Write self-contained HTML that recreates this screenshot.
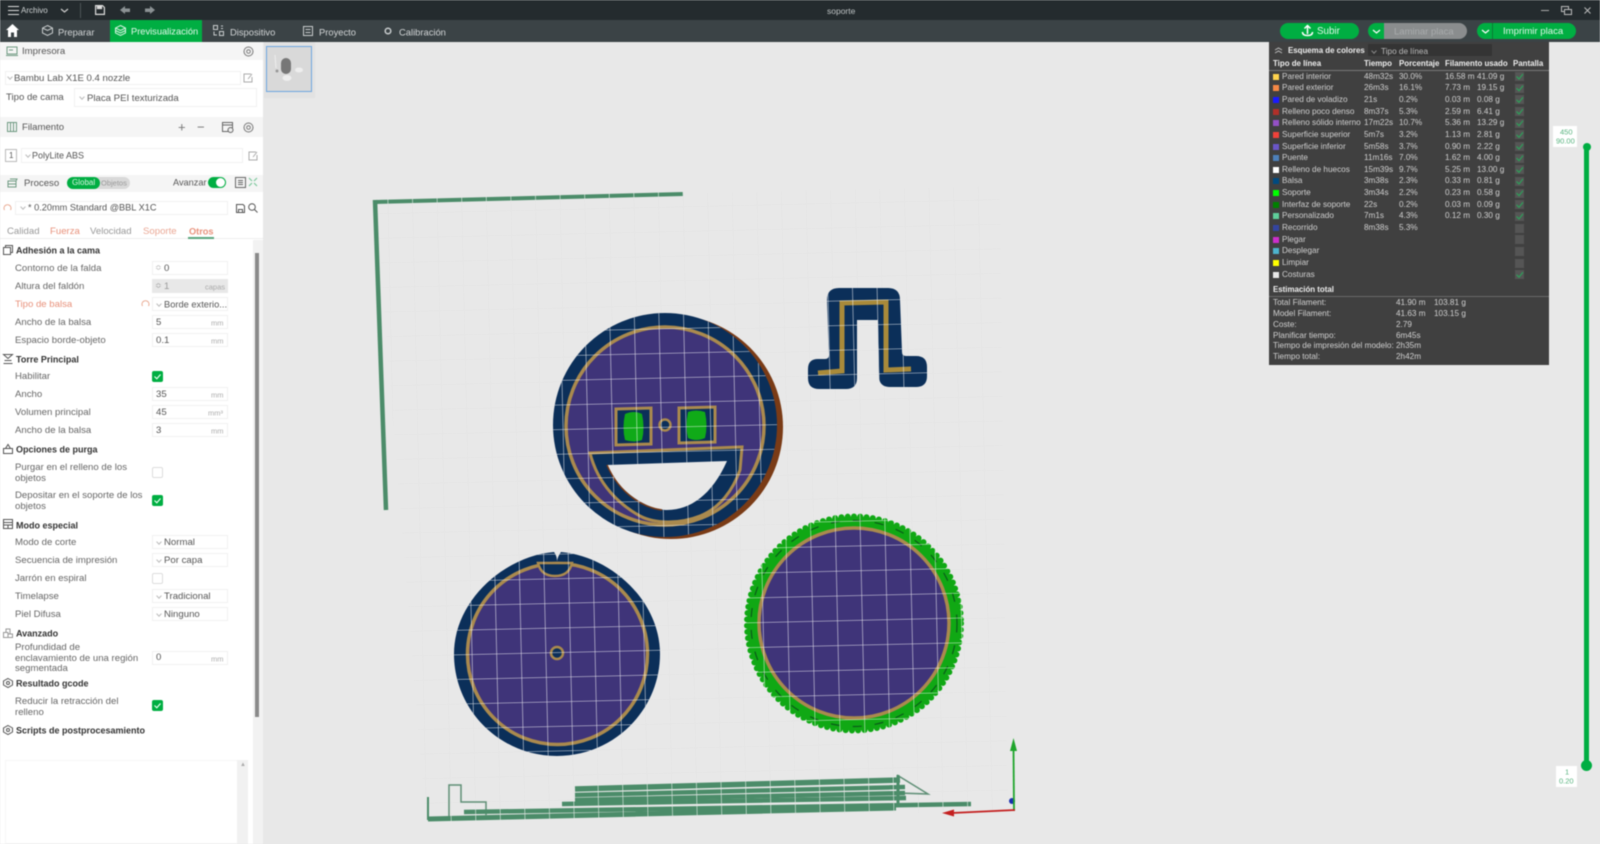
<!DOCTYPE html>
<html lang="es"><head><meta charset="utf-8"><title>soporte</title>
<style>
html,body{margin:0;padding:0;width:1600px;height:844px;overflow:hidden;background:#e8e8e8}
#app{position:absolute;left:0;top:0;width:1600px;height:844px;overflow:hidden;font-family:"Liberation Sans",sans-serif;filter:blur(.45px)}
.a{position:absolute}
.t{position:absolute;white-space:nowrap;line-height:1;transform:translateY(calc(-50% + 1px));font-size:9.6px;color:#666}
.b{font-weight:bold;color:#333;font-size:9px}
.box{position:absolute;background:#fff;border:1px solid #f1f1f1;box-sizing:border-box}
.hd{position:absolute;left:0;width:263px;background:#f5f5f5}
.u{color:#aaa;font-size:7.5px}
.cv{position:absolute;width:3px;height:3px;border-right:1px solid #bbb;border-bottom:1px solid #bbb;transform:rotate(45deg)}
.chk{position:absolute;left:152px;width:11px;height:11px;background:#00ae42;border-radius:2px}
.chk svg{position:absolute;left:0;top:0}
.unc{position:absolute;left:152px;width:11px;height:11px;background:#fff;border:1px solid #ddd;box-sizing:border-box;border-radius:2px}
.w{color:#d0d0d0;font-size:8.2px}
.h{color:#eee;font-size:7.9px;font-weight:bold}
.sw{position:absolute;left:1273px;width:6px;height:6px}
.ck{position:absolute;left:1515px;width:9px;height:9px;background:#555}
svg.i{position:absolute;overflow:visible}
</style></head><body><div id="app">

<!-- viewport -->
<svg class="a" style="left:0;top:0" width="1600" height="844" viewBox="0 0 1600 844">
<defs>
<pattern id="pf" width="24.6" height="24.6" patternUnits="userSpaceOnUse" patternTransform="translate(545,628) rotate(-1.3)"><path d="M0 0H24.6M0 0V24.6" stroke="#dedede" stroke-width="1" fill="none"/></pattern>
<pattern id="p1" width="24.6" height="24.6" patternUnits="userSpaceOnUse" patternTransform="translate(636,403) rotate(-1.3)"><path d="M0 0H24.6M0 0V24.6" stroke="#fff" stroke-width="1.1" opacity=".85" fill="none"/></pattern>
<pattern id="p2" width="24.6" height="24.6" patternUnits="userSpaceOnUse" patternTransform="translate(545,628) rotate(-1.3)"><path d="M0 0H24.6M0 0V24.6" stroke="#fff" stroke-width="1.1" opacity=".85" fill="none"/></pattern>
<pattern id="p3" width="24.8" height="24.8" patternUnits="userSpaceOnUse" patternTransform="translate(862,620) rotate(-1.3)"><path d="M0 0H24.8M0 0V24.8" stroke="#fff" stroke-width="1.1" opacity=".85" fill="none"/></pattern>
<pattern id="p4" width="24.6" height="24.6" patternUnits="userSpaceOnUse" patternTransform="translate(853,325) rotate(-1.3)"><path d="M0 0H24.6M0 0V24.6" stroke="#fff" stroke-width="1.1" opacity=".85" fill="none"/></pattern>
<pattern id="pr" width="24.6" height="50" patternUnits="userSpaceOnUse" patternTransform="translate(545,628) rotate(-1.3)"><rect width="24.6" height="50" fill="#4b8c69"/><path d="M0 0V50" stroke="#fff" stroke-width="1"/></pattern>
<path id="pi" d="M839 288H888Q900 288 900 300L902 352Q902 356 906 356H916Q927 356 927 367V376Q927 387 916 387H890Q879 387 879 376L878 320H857L857 378Q857 389 846 389H819Q808 389 808 378V369Q808 359 818 359H825Q829 359 829 355L827 300Q827 288 839 288Z"/>
</defs>
<rect x="0" y="0" width="1600" height="844" fill="#e8e8e8"/>
<path d="M375 200L1000 186L1008 812L425 820Z" fill="url(#pf)" opacity=".5"/>

<!-- L rail -->
<path d="M376 202L683 194" stroke="url(#pr)" stroke-width="4" fill="none"/>
<path d="M375 200L386 510" stroke="url(#pr)" stroke-width="4.5" fill="none"/>
<path d="M373 202H378" stroke="#4b8c69" stroke-width="4"/>

<!-- smiley -->
<circle cx="671" cy="427" r="112" fill="#7a3b16"/>
<circle cx="665" cy="425" r="112" fill="#0b2f59"/>
<circle cx="665" cy="426" r="99" fill="#3f3479" stroke="#aa8a4e" stroke-width="3.500"/>
<path d="M590 453L742 447L740 470C733 490 720 508 700 516C680 524 655 524 640 516C620 505 598 485 590 453Z" fill="#0b2f59" stroke="#aa8a4e" stroke-width="3"/>
<path d="M607 465L727 461C712 495 690 510 667 510C650 510 620 495 607 465Z" fill="#e8e8e8"/>
<path d="M607 465C620 495 645 508 662 510" fill="none" stroke="#7a3b16" stroke-width="1.500"/>
<path d="M616 409L651 408L651 444L616 445Z" fill="#0b2f59" stroke="#aa8a4e" stroke-width="3"/>
<path d="M679 408L715 407L715 442L679 443Z" fill="#0b2f59" stroke="#aa8a4e" stroke-width="3"/>
<path d="M625 414Q634 410 642 414Q645 428 642 440Q634 443 625 440Q622 428 625 414Z" fill="#10aa18"/>
<path d="M688 412Q696 409 705 412Q708 426 705 438Q696 442 688 438Q685 426 688 412Z" fill="#10aa18"/>
<circle cx="665" cy="425" r="5.500" fill="#0b2f59" stroke="#aa8a4e" stroke-width="2.500"/>
<path fill-rule="evenodd" d="M553 425a112 112 0 1 0 224 0a112 112 0 1 0 -224 0ZM607 465L727 461C712 495 690 510 667 510C650 510 620 495 607 465Z" fill="url(#p1)"/>

<!-- pi shape -->
<use href="#pi" fill="#0b2f59"/>
<path d="M818 373L842 371L842 303L886 302L886 370L911 369" fill="none" stroke="#a98a3a" stroke-width="5"/>
<use href="#pi" fill="url(#p4)"/>

<!-- circle 2 -->
<path d="M554 552Q557 556 557 561Q558 556 561 552C610 556 660 600 660 654C660 710 614 756 557 756C500 756 454 710 454 654C454 600 505 556 554 552Z" fill="#0b2f59"/>
<ellipse cx="557.500" cy="654" rx="90" ry="90.500" fill="#3f3479" stroke="#aa8a4e" stroke-width="3.500"/>
<path d="M538 563Q541 576 555 576Q569 576 572 563Z" fill="#0b2f59" stroke="#aa8a4e" stroke-width="2.500"/>
<circle cx="557" cy="653" r="6" fill="#0b2f59" stroke="#aa8a4e" stroke-width="2.500"/>
<path d="M554 552Q557 556 557 561Q558 556 561 552C610 556 660 600 660 654C660 710 614 756 557 756C500 756 454 710 454 654C454 600 505 556 554 552Z" fill="url(#p2)"/>

<!-- circle 3 -->
<circle cx="854" cy="623.500" r="107" fill="#10a814"/>
<circle cx="854" cy="623.500" r="107" fill="none" stroke="#10a814" stroke-width="6" stroke-linecap="round" stroke-dasharray="0 6.300"/>
<circle cx="854" cy="623.500" r="103" fill="none" stroke="#0b5a1a" stroke-width="1.200" stroke-dasharray="9 13"/>
<circle cx="854" cy="623" r="95" fill="#3f3479" stroke="#aa8a4e" stroke-width="3.500"/>
<circle cx="854" cy="623.500" r="110" fill="url(#p3)"/>

<!-- bottom rails -->
<path d="M428 797V820" stroke="#4b8c69" stroke-width="2" fill="none"/>
<path d="M449 818V785H461V802H486V815" fill="none" stroke="#5f8f76" stroke-width="1.500"/>
<path d="M897 775L928 794L898 793" fill="none" stroke="#5f8f76" stroke-width="1.500"/>
<path d="M898 775V807" stroke="#4b8c69" stroke-width="3" fill="none"/>
<g fill="none" stroke="url(#pr)">
<path d="M428 819L896 808" stroke-width="5"/>
<path d="M464 812L971 804" stroke-width="4.500"/>
<path d="M562 804L906 798" stroke-width="4.500"/>
<path d="M575 800L905 793" stroke-width="4.500"/>
<path d="M575 795L905 787" stroke-width="4.500"/>
<path d="M575 789L900 780" stroke-width="5.500"/>
</g>

<!-- axes -->
<circle cx="1012" cy="801" r="3" fill="#1a2fb0"/>
<path d="M1014 811L1013.500 748" stroke="#1fa52c" stroke-width="1.800"/>
<path d="M1013.500 738L1017 751H1010Z" fill="#1fa52c"/>
<path d="M1015 810L952 813" stroke="#c41f1f" stroke-width="1.800"/>
<path d="M942 813L954 809.500V816.500Z" fill="#c41f1f"/>
</svg>

<!-- thumbnail -->
<div class="a" style="left:264px;top:42px;width:51px;height:56px;background:#e2e2e2"></div>
<div class="a" style="left:266px;top:46px;width:46px;height:46px;background:#d9d9d9;border:1px solid #6ea6e0;box-sizing:border-box"></div>
<svg class="i" style="left:266px;top:46px" width="46" height="46"><path d="M9 9L10 22" stroke="#eee" stroke-width="1"/><rect x="15" y="12" width="10" height="16" rx="5" fill="#777"/><ellipse cx="33" cy="24" rx="4" ry="2.500" fill="#eee"/><ellipse cx="21" cy="32" rx="4.500" ry="3" fill="#eee"/><circle cx="11" cy="25" r="1.500" fill="#999"/></svg>

<!-- left panel -->
<div class="a" style="left:0;top:42px;width:263px;height:802px;background:#fff"></div>
<div class="a" style="left:253px;top:240px;width:10px;height:604px;background:#f2f2f2"></div>
<div class="a" style="left:255px;top:253px;width:4px;height:464px;background:#8a8a8a"></div>
<div class="hd" style="top:42px;height:18px"></div>
<div class="hd" style="top:117px;height:20px"></div>
<div class="hd" style="top:175px;height:17px"></div>

<svg class="i" style="left:6px;top:46px" width="12" height="10" fill="none" stroke="#6f9a82" stroke-width="1"><rect x="1" y="1" width="10" height="7"/><path d="M3 4H7M0 9.500H12"/></svg>
<span class="t" style="left:22px;top:51px;color:#555">Impresora</span>
<svg class="i" style="left:243px;top:46px" width="11" height="11" fill="none" stroke="#777" stroke-width="1"><circle cx="5.500" cy="5.500" r="4.500"/><circle cx="5.500" cy="5.500" r="1.800"/></svg>

<div class="box" style="left:5px;top:71px;width:236px;height:14px"></div>
<i class="cv" style="left:8px;top:75px"></i>
<span class="t" style="left:14px;top:78px;color:#555">Bambu Lab X1E 0.4 nozzle</span>
<svg class="i" style="left:243px;top:73px" width="10" height="10" fill="none" stroke="#aaa" stroke-width="1"><path d="M8 1H1V9H9V4M5 6L9 1"/></svg>
<span class="t" style="left:6px;top:97px;color:#555">Tipo de cama</span>
<div class="box" style="left:74px;top:88px;width:183px;height:19px"></div>
<i class="cv" style="left:80px;top:95px"></i>
<span class="t" style="left:87px;top:98px;color:#555">Placa PEI texturizada</span>

<svg class="i" style="left:7px;top:122px" width="10" height="10" fill="none" stroke="#6f9a82" stroke-width="1"><rect x=".5" y=".5" width="9" height="9"/><path d="M3.500 1V9M6.500 1V9"/></svg>
<span class="t" style="left:22px;top:127px;color:#555">Filamento</span>
<span class="t" style="left:178px;top:126px;color:#777;font-size:13px">+</span>
<span class="t" style="left:197px;top:126px;color:#777;font-size:13px">−</span>
<svg class="i" style="left:222px;top:122px" width="12" height="11" fill="none" stroke="#666" stroke-width="1"><rect x=".5" y=".5" width="10" height="9"/><path d="M.5 3H10.500"/><circle cx="8.500" cy="8" r="2.500" fill="#eee"/></svg>
<svg class="i" style="left:243px;top:122px" width="11" height="11" fill="none" stroke="#777" stroke-width="1"><circle cx="5.500" cy="5.500" r="4.500"/><circle cx="5.500" cy="5.500" r="1.800"/></svg>

<div class="box" style="left:5px;top:149px;width:12px;height:13px;border-color:#bbb"></div>
<span class="t" style="left:9px;top:155px;color:#555;font-size:8px">1</span>
<div class="box" style="left:21px;top:148px;width:222px;height:15px"></div>
<i class="cv" style="left:26px;top:153px"></i>
<span class="t" style="left:32px;top:155px;color:#555;font-size:9px">PolyLite ABS</span>
<svg class="i" style="left:248px;top:151px" width="10" height="10" fill="none" stroke="#aaa" stroke-width="1"><path d="M8 1H1V9H9V4M5 6L9 1"/></svg>

<svg class="i" style="left:7px;top:178px" width="11" height="10" fill="none" stroke="#6f9a82" stroke-width="1"><path d="M1 3H9V6H1ZM1 6V9H9V6M9 3L10 1H3"/></svg>
<span class="t" style="left:24px;top:183px;color:#555">Proceso</span>
<div class="a" style="left:67px;top:177px;width:63px;height:12px;border-radius:6px;background:#d9d9d9"></div>
<div class="a" style="left:67px;top:177px;width:33px;height:12px;border-radius:6px;background:#00ae42"></div>
<span class="t" style="left:72px;top:182px;color:#d8f5e3;font-size:8px">Global</span>
<span class="t" style="left:101px;top:182px;color:#999;font-size:7.500px">Objetos</span>
<span class="t" style="left:173px;top:182px;color:#555;font-size:9.200px">Avanzar</span>
<div class="a" style="left:208px;top:177px;width:18px;height:11px;border-radius:6px;background:#00ae42"></div>
<div class="a" style="left:216px;top:178px;width:9px;height:9px;border-radius:5px;background:#fff"></div>
<svg class="i" style="left:235px;top:177px" width="11" height="11" fill="none" stroke="#666" stroke-width="1"><rect x=".5" y=".5" width="10" height="10"/><path d="M3 3.500H8M3 5.500H8M3 7.500H8"/></svg>
<svg class="i" style="left:248px;top:177px" width="10" height="10" fill="none" stroke="#7cc79c" stroke-width="1.200"><path d="M1 1L4 4M9 1L6 4M1 9L4 6M9 9L6 6"/></svg>

<svg class="i" style="left:3px;top:204px" width="9" height="9" fill="none" stroke="#e8a78e" stroke-width="1"><path d="M1.500 6A3.500 3.500 0 1 1 7.500 6"/></svg>
<div class="box" style="left:15px;top:201px;width:213px;height:14px"></div>
<i class="cv" style="left:21px;top:205px"></i>
<span class="t" style="left:28px;top:207px;color:#555;font-size:9.200px">* 0.20mm Standard @BBL X1C</span>
<svg class="i" style="left:236px;top:204px" width="9" height="9" fill="none" stroke="#555" stroke-width="1"><path d="M.5 .5H7L8.500 2V8.500H.5Z"/><path d="M2.500 8V5.500H6.500V8"/></svg>
<svg class="i" style="left:248px;top:203px" width="10" height="10" fill="none" stroke="#555" stroke-width="1"><circle cx="4" cy="4" r="3.300"/><path d="M6.500 6.500L9.500 9.500"/></svg>

<span class="t" style="left:7px;top:231px;color:#999">Calidad</span>
<span class="t" style="left:50px;top:231px;color:#e8917b">Fuerza</span>
<span class="t" style="left:90px;top:231px;color:#999">Velocidad</span>
<span class="t" style="left:143px;top:231px;color:#eaa794">Soporte</span>
<span class="t" style="left:189px;top:231px;color:#e8917b;font-weight:bold;font-size:9.200px">Otros</span>
<div class="a" style="left:0;top:238px;width:263px;height:1px;background:#eee"></div>
<div class="a" style="left:188px;top:237px;width:26px;height:2px;background:#5aa57c"></div>

<!-- settings -->
<svg class="i" style="left:3px;top:245px" width="10" height="10" fill="none" stroke="#555" stroke-width="1"><rect x=".5" y="2.500" width="7" height="7"/><path d="M2.500 2.500V.5H9.500V7.500H7.500"/></svg>
<span class="t b" style="left:16px;top:250px">Adhesión a la cama</span>
<span class="t" style="left:15px;top:268px">Contorno de la falda</span>
<div class="box" style="left:152px;top:261px;width:76px;height:14px"></div>
<span class="t" style="left:155px;top:267px;color:#bbb;font-size:8px">≎</span>
<span class="t" style="left:164px;top:268px;color:#555">0</span>
<span class="t" style="left:15px;top:286px">Altura del faldón</span>
<div class="box" style="left:152px;top:279px;width:76px;height:14px;background:#e8e8e8;border-color:#e8e8e8"></div>
<span class="t" style="left:155px;top:285px;color:#aaa;font-size:8px">≎</span>
<span class="t" style="left:164px;top:286px;color:#999">1</span>
<span class="t u" style="left:205px;top:286px">capas</span>
<span class="t" style="left:15px;top:304px;color:#e8917b">Tipo de balsa</span>
<svg class="i" style="left:141px;top:300px" width="9" height="9" fill="none" stroke="#e8a78e" stroke-width="1"><path d="M1.500 6A3.500 3.500 0 1 1 7.500 6"/></svg>
<div class="box" style="left:152px;top:297px;width:76px;height:14px"></div>
<i class="cv" style="left:157px;top:302px"></i>
<span class="t" style="left:164px;top:304px;color:#555;font-size:9.300px">Borde exterio...</span>
<span class="t" style="left:15px;top:322px">Ancho de la balsa</span>
<div class="box" style="left:152px;top:315px;width:76px;height:14px"></div>
<span class="t" style="left:156px;top:322px;color:#555">5</span>
<span class="t u" style="left:211px;top:322px">mm</span>
<span class="t" style="left:15px;top:340px">Espacio borde-objeto</span>
<div class="box" style="left:152px;top:333px;width:76px;height:14px"></div>
<span class="t" style="left:156px;top:340px;color:#555">0.1</span>
<span class="t u" style="left:211px;top:340px">mm</span>

<svg class="i" style="left:3px;top:354px" width="10" height="10" fill="none" stroke="#555" stroke-width="1"><path d="M.5 .5H9.500L5 4.500L.5 .5ZM.5 9.500H9.500M1.500 6.500H8.500"/></svg>
<span class="t b" style="left:16px;top:359px">Torre Principal</span>
<span class="t" style="left:15px;top:376px">Habilitar</span>
<div class="chk" style="top:371px"><svg width="11" height="11"><path d="M2.500 5.500L4.800 7.800L8.500 3.500" fill="none" stroke="#e6fff0" stroke-width="1.200"/></svg></div>
<span class="t" style="left:15px;top:394px">Ancho</span>
<div class="box" style="left:152px;top:387px;width:76px;height:14px"></div>
<span class="t" style="left:156px;top:394px;color:#555">35</span>
<span class="t u" style="left:211px;top:394px">mm</span>
<span class="t" style="left:15px;top:412px">Volumen principal</span>
<div class="box" style="left:152px;top:405px;width:76px;height:14px"></div>
<span class="t" style="left:156px;top:412px;color:#555">45</span>
<span class="t u" style="left:208px;top:412px">mm³</span>
<span class="t" style="left:15px;top:430px">Ancho de la balsa</span>
<div class="box" style="left:152px;top:423px;width:76px;height:14px"></div>
<span class="t" style="left:156px;top:430px;color:#555">3</span>
<span class="t u" style="left:211px;top:430px">mm</span>

<svg class="i" style="left:3px;top:444px" width="10" height="10" fill="none" stroke="#555" stroke-width="1"><path d="M.5 4.500H9.500V9.500H.5ZM2.500 4.500L5 .5L7.500 4.500"/></svg>
<span class="t b" style="left:16px;top:449px">Opciones de purga</span>
<span class="t" style="left:15px;top:467px">Purgar en el relleno de los</span>
<span class="t" style="left:15px;top:478px">objetos</span>
<div class="unc" style="top:467px"></div>
<span class="t" style="left:15px;top:495px">Depositar en el soporte de los</span>
<span class="t" style="left:15px;top:506px">objetos</span>
<div class="chk" style="top:495px"><svg width="11" height="11"><path d="M2.500 5.500L4.800 7.800L8.500 3.500" fill="none" stroke="#e6fff0" stroke-width="1.200"/></svg></div>

<svg class="i" style="left:3px;top:519px" width="10" height="10" fill="none" stroke="#555" stroke-width="1"><rect x=".5" y=".5" width="9" height="9"/><path d="M.5 3.500H9.500M.5 6H9.500M5 6V9.500"/></svg>
<span class="t b" style="left:16px;top:524.500px">Modo especial</span>
<span class="t" style="left:15px;top:542px">Modo de corte</span>
<div class="box" style="left:152px;top:535px;width:76px;height:14px"></div>
<i class="cv" style="left:157px;top:540px"></i>
<span class="t" style="left:164px;top:542px;color:#555">Normal</span>
<span class="t" style="left:15px;top:560px">Secuencia de impresión</span>
<div class="box" style="left:152px;top:553px;width:76px;height:14px"></div>
<i class="cv" style="left:157px;top:558px"></i>
<span class="t" style="left:164px;top:560px;color:#555">Por capa</span>
<span class="t" style="left:15px;top:578px">Jarrón en espiral</span>
<div class="unc" style="top:573px"></div>
<span class="t" style="left:15px;top:596px">Timelapse</span>
<div class="box" style="left:152px;top:589px;width:76px;height:14px"></div>
<i class="cv" style="left:157px;top:594px"></i>
<span class="t" style="left:164px;top:596px;color:#555">Tradicional</span>
<span class="t" style="left:15px;top:614px">Piel Difusa</span>
<div class="box" style="left:152px;top:607px;width:76px;height:14px"></div>
<i class="cv" style="left:157px;top:612px"></i>
<span class="t" style="left:164px;top:614px;color:#555">Ninguno</span>

<svg class="i" style="left:3px;top:628px" width="10" height="10" fill="none" stroke="#999" stroke-width="1"><path d="M.5 4.500H5V9.500H.5ZM5 6H9.500V9.500H5ZM3 4.500V1H7V6"/></svg>
<span class="t b" style="left:16px;top:633px">Avanzado</span>
<span class="t" style="left:15px;top:647px">Profundidad de</span>
<span class="t" style="left:15px;top:657.500px">enclavamiento de una región</span>
<span class="t" style="left:15px;top:668px">segmentada</span>
<div class="box" style="left:152px;top:651px;width:76px;height:14px"></div>
<span class="t" style="left:156px;top:657px;color:#555">0</span>
<span class="t u" style="left:211px;top:658px">mm</span>

<svg class="i" style="left:3px;top:678px" width="10" height="10" fill="none" stroke="#555" stroke-width="1"><path d="M5 .5L9.500 3V7L5 9.500L.5 7V3Z"/><circle cx="5" cy="5" r="1.500"/></svg>
<span class="t b" style="left:16px;top:683px">Resultado gcode</span>
<span class="t" style="left:15px;top:701px">Reducir la retracción del</span>
<span class="t" style="left:15px;top:711.500px">relleno</span>
<div class="chk" style="top:700px"><svg width="11" height="11"><path d="M2.500 5.500L4.800 7.800L8.500 3.500" fill="none" stroke="#e6fff0" stroke-width="1.200"/></svg></div>

<svg class="i" style="left:3px;top:725px" width="10" height="10" fill="none" stroke="#555" stroke-width="1"><path d="M5 .5L9.500 3V7L5 9.500L.5 7V3Z"/><circle cx="5" cy="5" r="1.500"/></svg>
<span class="t b" style="left:16px;top:730px">Scripts de postprocesamiento</span>

<div class="a" style="left:5px;top:760px;width:243px;height:84px;background:#fff;border:1px solid #f6f6f6;box-sizing:border-box"></div>
<div class="a" style="left:237px;top:760px;width:11px;height:84px;background:#f1f1f1"></div>
<span class="t" style="left:240px;top:764px;color:#aaa;font-size:6px">▲</span>

<!-- top bars -->
<div class="a" style="left:0;top:0;width:1600px;height:20px;background:#242b2e"></div>
<div class="a" style="left:0;top:20px;width:1600px;height:22px;background:#3b4346"></div>
<div class="a" style="left:110px;top:20px;width:92px;height:22px;background:#00ae42"></div>

<svg class="i" style="left:8px;top:6px" width="11" height="9" stroke="#ddd" stroke-width="1"><path d="M0 .5H11M0 4.500H11M0 8.500H11"/></svg>
<span class="t" style="left:21px;top:10px;color:#cfd3d4;font-size:8px">Archivo</span>
<svg class="i" style="left:60px;top:8px" width="9" height="5" fill="none" stroke="#ccc" stroke-width="1.200"><path d="M1 1L4.500 4L8 1"/></svg>
<div class="a" style="left:80px;top:3px;width:1px;height:15px;background:#4d5558"></div>
<svg class="i" style="left:95px;top:5px" width="10" height="10" fill="none" stroke="#ddd" stroke-width="1.200"><path d="M.6 .6H7.500L9.400 2.500V9.400H.6Z"/><path d="M2.500 .6V3.500H6.500V.6" fill="#ddd"/></svg>
<svg class="i" style="left:120px;top:6px" width="10" height="8" fill="#8b9294"><path d="M0 4L5 0V2.500H10V6H5V8Z"/></svg>
<svg class="i" style="left:145px;top:6px" width="10" height="8" fill="#8b9294"><path d="M10 4L5 0V2.500H0V6H5V8Z"/></svg>
<span class="t" style="left:827px;top:9.500px;color:#bdc2c3;font-size:8.500px">soporte</span>
<div class="a" style="left:1541px;top:10px;width:8px;height:1px;background:#aaa"></div>
<svg class="i" style="left:1561px;top:6px" width="11" height="9" fill="none" stroke="#bbb" stroke-width="1"><rect x=".5" y=".5" width="7" height="5"/><rect x="3.500" y="3.500" width="7" height="5" fill="#242b2e"/></svg>
<svg class="i" style="left:1584px;top:7px" width="7" height="7" stroke="#bbb" stroke-width="1"><path d="M.5 .5L6.500 6.500M6.500 .5L.5 6.500"/></svg>

<svg class="i" style="left:6px;top:24px" width="13" height="13" fill="#fff"><path d="M6.500 0L13 6H11V13H8V8.500H5V13H2V6H0Z"/></svg>
<svg class="i" style="left:42px;top:25px" width="11" height="11" fill="none" stroke="#c9cdce" stroke-width="1"><path d="M5.500 .5L10.500 3V8L5.500 10.500L.5 8V3ZM.5 3L5.500 5.500L10.500 3"/></svg>
<span class="t" style="left:58px;top:31px;color:#d3d6d7;font-size:9.400px">Preparar</span>
<svg class="i" style="left:115px;top:25px" width="11" height="11" fill="none" stroke="#d8f5e3" stroke-width="1"><path d="M5.500 .5L10.500 3V8L5.500 10.500L.5 8V3ZM.5 5.500L5.500 8L10.500 5.500M.5 3L5.500 5.500L10.500 3"/></svg>
<span class="t" style="left:131px;top:31px;color:#e4f9ec;font-size:9.300px">Previsualización</span>
<svg class="i" style="left:213px;top:25px" width="11" height="11" fill="none" stroke="#c9cdce" stroke-width="1"><rect x=".5" y=".5" width="4" height="4"/><rect x="6.500" y="6.500" width="4" height="4"/><path d="M8 1H10M8 3.500H10M1 6.500V10H4"/></svg>
<span class="t" style="left:230px;top:31px;color:#d3d6d7;font-size:9.400px">Dispositivo</span>
<svg class="i" style="left:303px;top:26px" width="10" height="10" fill="none" stroke="#c9cdce" stroke-width="1"><rect x=".5" y=".5" width="9" height="9"/><path d="M2.500 3.500H7.500M2.500 6.500H7.500"/></svg>
<span class="t" style="left:319px;top:31px;color:#d3d6d7;font-size:9.400px">Proyecto</span>
<svg class="i" style="left:384px;top:27px" width="8" height="8" fill="none" stroke="#c9cdce" stroke-width="1.500"><circle cx="4" cy="4" r="2.800"/></svg>
<span class="t" style="left:399px;top:31px;color:#d3d6d7;font-size:9.400px">Calibración</span>

<!-- buttons -->
<div class="a" style="left:1280px;top:23px;width:79px;height:16px;border-radius:8px;background:#00ae42"></div>
<svg class="i" style="left:1301px;top:24px" width="13" height="13" fill="none" stroke="#fff" stroke-width="1.500"><path d="M6.500 10V2M3.500 4.500L6.500 1.500L9.500 4.500M1.500 8Q1.500 11.500 6.500 11.500Q11.500 11.500 11.500 8"/></svg>
<span class="t" style="left:1317px;top:30.500px;color:#dff7e8;font-size:9.800px">Subir</span>
<div class="a" style="left:1368px;top:23px;width:30px;height:16px;border-radius:8px;background:#00ae42"></div>
<div class="a" style="left:1384px;top:23px;width:83px;height:16px;border-radius:0 8px 8px 0;background:#8a8d8e"></div>
<svg class="i" style="left:1372px;top:29px" width="9" height="5" fill="none" stroke="#fff" stroke-width="1.200"><path d="M1 1L4.500 4L8 1"/></svg>
<span class="t" style="left:1394px;top:30.500px;color:#a9acad;font-size:9.500px">Laminar placa</span>
<div class="a" style="left:1477px;top:23px;width:99px;height:16px;border-radius:8px;background:#00ae42"></div>
<div class="a" style="left:1492px;top:23px;width:1px;height:16px;background:#0b7a35"></div>
<svg class="i" style="left:1481px;top:29px" width="9" height="5" fill="none" stroke="#fff" stroke-width="1.200"><path d="M1 1L4.500 4L8 1"/></svg>
<span class="t" style="left:1503px;top:30.500px;color:#dff7e8;font-size:9.600px">Imprimir placa</span>

<!-- legend panel -->
<div class="a" style="left:1269px;top:42px;width:280px;height:323px;background:#404040"></div>
<div class="a" style="left:1368px;top:44px;width:124px;height:12px;background:#343434"></div>
<svg class="i" style="left:1274px;top:47px" width="9" height="7" fill="none" stroke="#bbb" stroke-width="1"><path d="M1 3L4.500 1L8 3M1 6L4.500 4L8 6"/></svg>
<span class="t h" style="left:1288px;top:49.500px">Esquema de colores</span>
<i class="cv" style="left:1372px;top:49px;border-color:#888"></i>
<span class="t w" style="left:1381px;top:50.500px;color:#bbb">Tipo de línea</span>
<span class="t h" style="left:1273px;top:63px">Tipo de línea</span>
<span class="t h" style="left:1364px;top:63px">Tiempo</span>
<span class="t h" style="left:1399px;top:63px">Porcentaje</span>
<span class="t h" style="left:1445px;top:63px">Filamento usado</span>
<span class="t h" style="left:1513px;top:63px">Pantalla</span>
<div class="a" style="left:1269px;top:70px;width:280px;height:1px;background:#777"></div>

<div class="sw" style="top:73.500px;background:#ffd34d"></div><span class="t w" style="left:1282px;top:75.500px">Pared interior</span><span class="t w" style="left:1364px;top:75.500px">48m32s</span><span class="t w" style="left:1399px;top:75.500px">30.0%</span><span class="t w" style="left:1445px;top:75.500px">16.58 m</span><span class="t w" style="left:1477px;top:75.500px">41.09 g</span><div class="ck" style="top:72px"></div>
<div class="sw" style="top:85.200px;background:#f58845"></div><span class="t w" style="left:1282px;top:87.200px">Pared exterior</span><span class="t w" style="left:1364px;top:87.200px">26m3s</span><span class="t w" style="left:1399px;top:87.200px">16.1%</span><span class="t w" style="left:1445px;top:87.200px">7.73 m</span><span class="t w" style="left:1477px;top:87.200px">19.15 g</span><div class="ck" style="top:83.700px"></div>
<div class="sw" style="top:96.800px;background:#1a1aff"></div><span class="t w" style="left:1282px;top:98.800px">Pared de voladizo</span><span class="t w" style="left:1364px;top:98.800px">21s</span><span class="t w" style="left:1399px;top:98.800px">0.2%</span><span class="t w" style="left:1445px;top:98.800px">0.03 m</span><span class="t w" style="left:1477px;top:98.800px">0.08 g</span><div class="ck" style="top:95.300px"></div>
<div class="sw" style="top:108.500px;background:#b03029"></div><span class="t w" style="left:1282px;top:110.500px">Relleno poco denso</span><span class="t w" style="left:1364px;top:110.500px">8m37s</span><span class="t w" style="left:1399px;top:110.500px">5.3%</span><span class="t w" style="left:1445px;top:110.500px">2.59 m</span><span class="t w" style="left:1477px;top:110.500px">6.41 g</span><div class="ck" style="top:107px"></div>
<div class="sw" style="top:120.100px;background:#9450c6"></div><span class="t w" style="left:1282px;top:122.100px">Relleno sólido interno</span><span class="t w" style="left:1364px;top:122.100px">17m22s</span><span class="t w" style="left:1399px;top:122.100px">10.7%</span><span class="t w" style="left:1445px;top:122.100px">5.36 m</span><span class="t w" style="left:1477px;top:122.100px">13.29 g</span><div class="ck" style="top:118.600px"></div>
<div class="sw" style="top:131.800px;background:#f0413a"></div><span class="t w" style="left:1282px;top:133.800px">Superficie superior</span><span class="t w" style="left:1364px;top:133.800px">5m7s</span><span class="t w" style="left:1399px;top:133.800px">3.2%</span><span class="t w" style="left:1445px;top:133.800px">1.13 m</span><span class="t w" style="left:1477px;top:133.800px">2.81 g</span><div class="ck" style="top:130.300px"></div>
<div class="sw" style="top:143.500px;background:#6a56c8"></div><span class="t w" style="left:1282px;top:145.500px">Superficie inferior</span><span class="t w" style="left:1364px;top:145.500px">5m58s</span><span class="t w" style="left:1399px;top:145.500px">3.7%</span><span class="t w" style="left:1445px;top:145.500px">0.90 m</span><span class="t w" style="left:1477px;top:145.500px">2.22 g</span><div class="ck" style="top:142px"></div>
<div class="sw" style="top:155.100px;background:#4d80ba"></div><span class="t w" style="left:1282px;top:157.100px">Puente</span><span class="t w" style="left:1364px;top:157.100px">11m16s</span><span class="t w" style="left:1399px;top:157.100px">7.0%</span><span class="t w" style="left:1445px;top:157.100px">1.62 m</span><span class="t w" style="left:1477px;top:157.100px">4.00 g</span><div class="ck" style="top:153.600px"></div>
<div class="sw" style="top:166.800px;background:#fff"></div><span class="t w" style="left:1282px;top:168.800px">Relleno de huecos</span><span class="t w" style="left:1364px;top:168.800px">15m39s</span><span class="t w" style="left:1399px;top:168.800px">9.7%</span><span class="t w" style="left:1445px;top:168.800px">5.25 m</span><span class="t w" style="left:1477px;top:168.800px">13.00 g</span><div class="ck" style="top:165.300px"></div>
<div class="sw" style="top:178.400px;background:#004a80"></div><span class="t w" style="left:1282px;top:180.400px">Balsa</span><span class="t w" style="left:1364px;top:180.400px">3m38s</span><span class="t w" style="left:1399px;top:180.400px">2.3%</span><span class="t w" style="left:1445px;top:180.400px">0.33 m</span><span class="t w" style="left:1477px;top:180.400px">0.81 g</span><div class="ck" style="top:176.900px"></div>
<div class="sw" style="top:190.100px;background:#00ff00"></div><span class="t w" style="left:1282px;top:192.100px">Soporte</span><span class="t w" style="left:1364px;top:192.100px">3m34s</span><span class="t w" style="left:1399px;top:192.100px">2.2%</span><span class="t w" style="left:1445px;top:192.100px">0.23 m</span><span class="t w" style="left:1477px;top:192.100px">0.58 g</span><div class="ck" style="top:188.600px"></div>
<div class="sw" style="top:201.800px;background:#008000"></div><span class="t w" style="left:1282px;top:203.800px">Interfaz de soporte</span><span class="t w" style="left:1364px;top:203.800px">22s</span><span class="t w" style="left:1399px;top:203.800px">0.2%</span><span class="t w" style="left:1445px;top:203.800px">0.03 m</span><span class="t w" style="left:1477px;top:203.800px">0.09 g</span><div class="ck" style="top:200.300px"></div>
<div class="sw" style="top:213.400px;background:#5ece9a"></div><span class="t w" style="left:1282px;top:215.400px">Personalizado</span><span class="t w" style="left:1364px;top:215.400px">7m1s</span><span class="t w" style="left:1399px;top:215.400px">4.3%</span><span class="t w" style="left:1445px;top:215.400px">0.12 m</span><span class="t w" style="left:1477px;top:215.400px">0.30 g</span><div class="ck" style="top:211.900px"></div>
<div class="sw" style="top:225.100px;background:#3344a0"></div><span class="t w" style="left:1282px;top:227.100px">Recorrido</span><span class="t w" style="left:1364px;top:227.100px">8m38s</span><span class="t w" style="left:1399px;top:227.100px">5.3%</span><div class="ck" style="top:223.600px"></div>
<div class="sw" style="top:236.700px;background:#cc2ecc"></div><span class="t w" style="left:1282px;top:238.700px">Plegar</span><div class="ck" style="top:235.200px"></div>
<div class="sw" style="top:248.400px;background:#4db3cc"></div><span class="t w" style="left:1282px;top:250.400px">Desplegar</span><div class="ck" style="top:246.900px"></div>
<div class="sw" style="top:260.100px;background:#ffff00"></div><span class="t w" style="left:1282px;top:262.100px">Limpiar</span><div class="ck" style="top:258.600px"></div>
<div class="sw" style="top:271.700px;background:#e8e8e8"></div><span class="t w" style="left:1282px;top:273.700px">Costuras</span><div class="ck" style="top:270.200px"></div>

<svg class="i" style="left:1515px;top:70px" width="9" height="210" fill="none" stroke="#2f9a58" stroke-width="1.300"><path d="M1.500 6.500L4 9L8 4M1.500 18.200L4 20.700L8 15.700M1.500 29.800L4 32.300L8 27.300M1.500 41.500L4 44L8 39M1.500 53.100L4 55.600L8 50.600M1.500 64.800L4 67.300L8 62.300M1.500 76.500L4 79L8 74M1.500 88.100L4 90.600L8 85.600M1.500 99.800L4 102.300L8 97.300M1.500 111.400L4 113.900L8 108.900M1.500 123.100L4 125.600L8 120.600M1.500 134.800L4 137.300L8 132.300M1.500 146.400L4 148.900L8 143.900M1.500 204.700L4 207.200L8 202.200"/></svg>

<span class="t h" style="left:1273px;top:289px">Estimación total</span>
<div class="a" style="left:1269px;top:296px;width:280px;height:1px;background:#6a6a6a"></div>
<span class="t w" style="left:1273px;top:302px">Total Filament:</span><span class="t w" style="left:1396px;top:302px">41.90 m</span><span class="t w" style="left:1434px;top:302px">103.81 g</span>
<span class="t w" style="left:1273px;top:313px">Model Filament:</span><span class="t w" style="left:1396px;top:313px">41.63 m</span><span class="t w" style="left:1434px;top:313px">103.15 g</span>
<span class="t w" style="left:1273px;top:323.500px">Coste:</span><span class="t w" style="left:1396px;top:323.500px">2.79</span>
<span class="t w" style="left:1273px;top:334.500px">Planificar tiempo:</span><span class="t w" style="left:1396px;top:334.500px">6m45s</span>
<span class="t w" style="left:1273px;top:345px">Tiempo de impresión del modelo:</span><span class="t w" style="left:1396px;top:345px">2h35m</span>
<span class="t w" style="left:1273px;top:356px">Tiempo total:</span><span class="t w" style="left:1396px;top:356px">2h42m</span>

<!-- slider -->
<div class="a" style="left:1584px;top:146px;width:5px;height:620px;background:#00ae42"></div>
<div class="a" style="left:1582.500px;top:142.500px;width:8px;height:8px;border-radius:4px;background:#00ae42"></div>
<div class="a" style="left:1581px;top:760px;width:11px;height:11px;border-radius:6px;background:#00ae42"></div>
<div class="a" style="left:1553px;top:126px;width:24px;height:21px;background:#fff"></div>
<span class="t" style="left:1560px;top:131px;color:#57b27e;font-size:7.500px">450</span>
<span class="t" style="left:1556px;top:140px;color:#57b27e;font-size:7.500px">90.00</span>
<div class="a" style="left:1556px;top:766px;width:21px;height:21px;background:#fff"></div>
<span class="t" style="left:1565px;top:771px;color:#57b27e;font-size:7.500px">1</span>
<span class="t" style="left:1559px;top:780px;color:#57b27e;font-size:7.500px">0.20</span>

</div></body></html>
